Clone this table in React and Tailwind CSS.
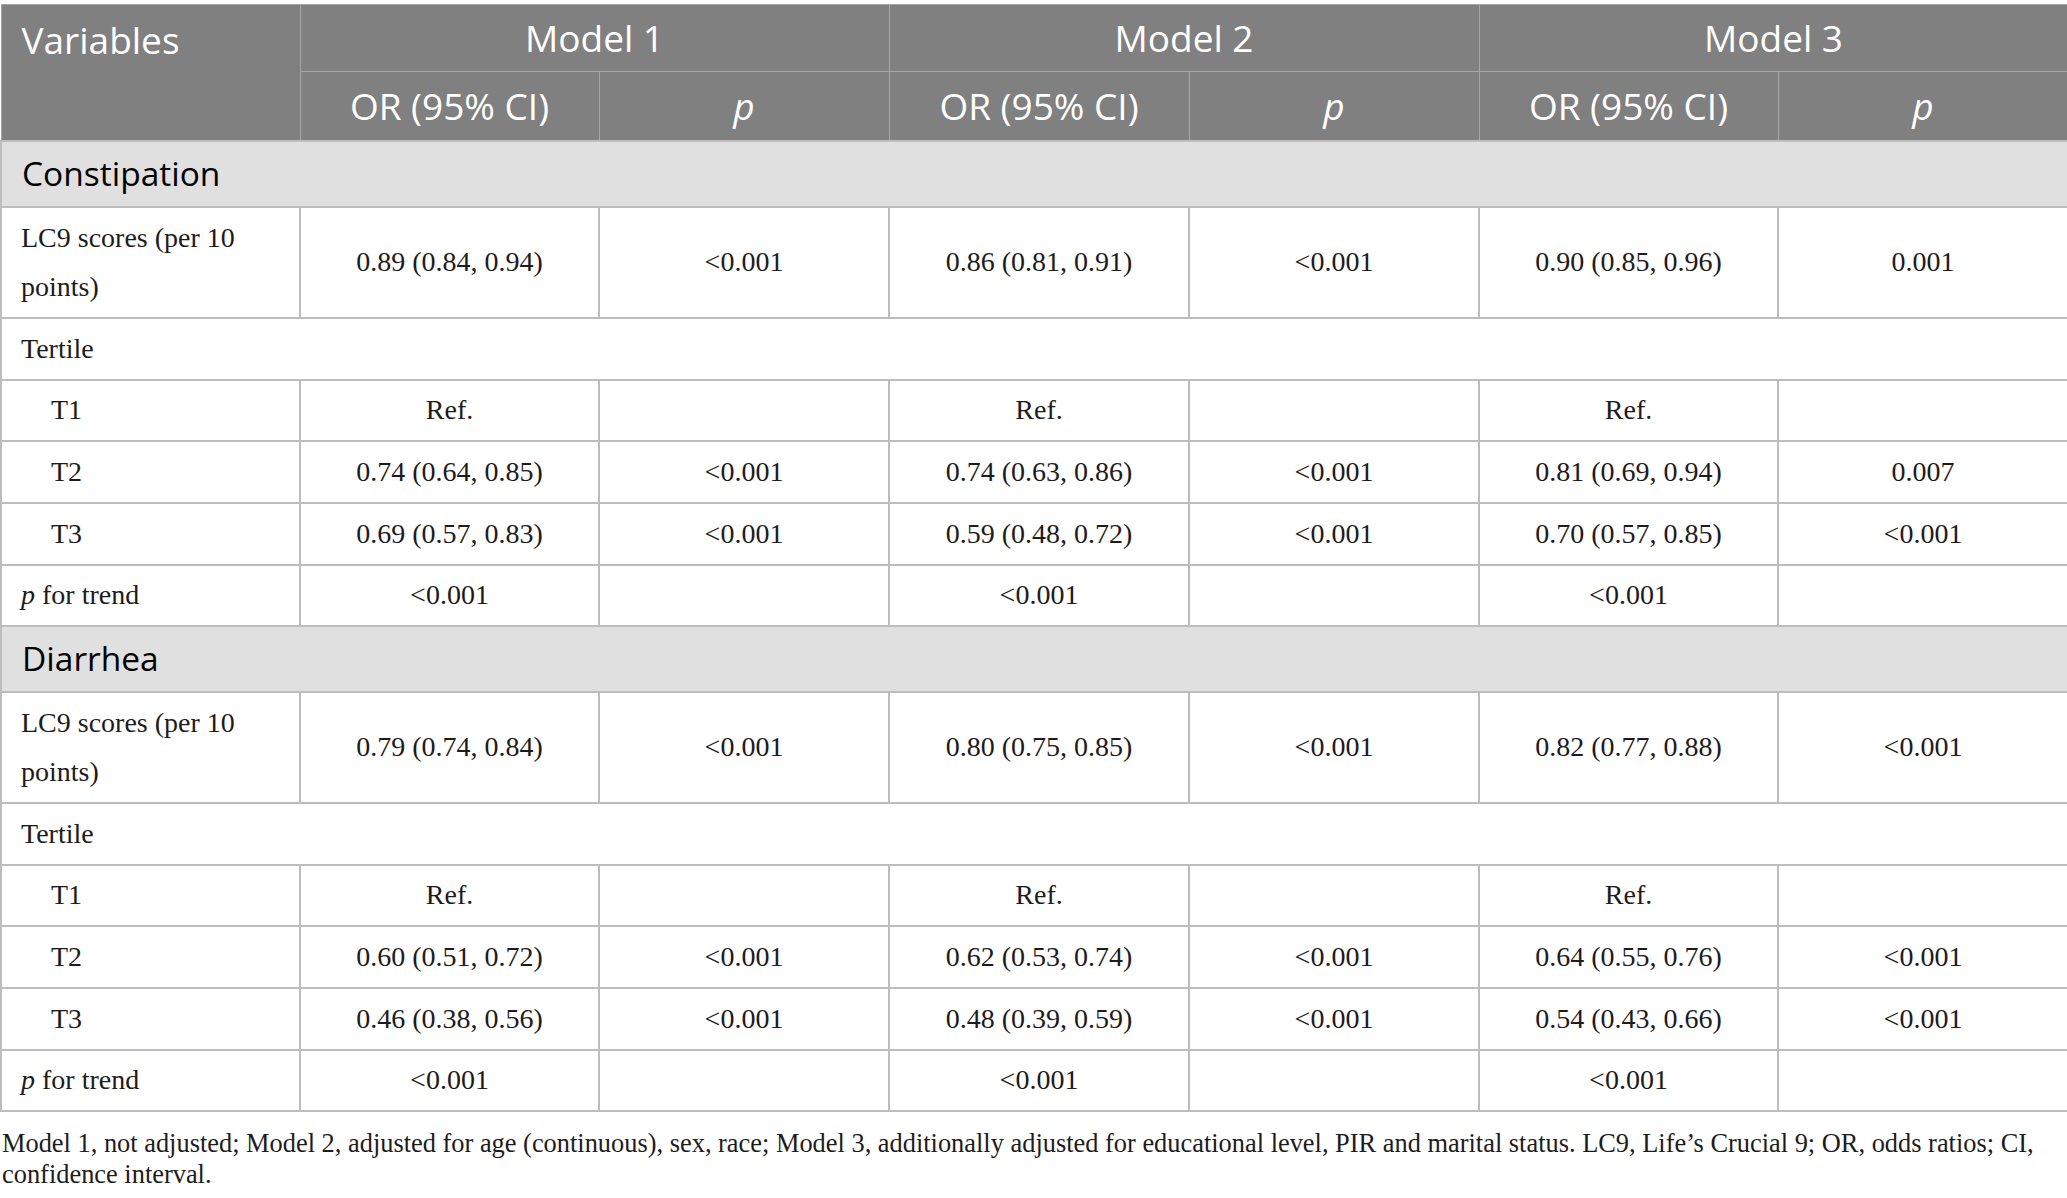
import React from 'react';

const sans = { fontFamily: '"Open Sans", "Noto Sans", sans-serif' };

const sections = [
    {
        title: 'Constipation',
        lc9: ['0.89 (0.84, 0.94)', '<0.001', '0.86 (0.81, 0.91)', '<0.001', '0.90 (0.85, 0.96)', '0.001'],
        rows: [
            ['T1', 'Ref.', '', 'Ref.', '', 'Ref.', ''],
            ['T2', '0.74 (0.64, 0.85)', '<0.001', '0.74 (0.63, 0.86)', '<0.001', '0.81 (0.69, 0.94)', '0.007'],
            ['T3', '0.69 (0.57, 0.83)', '<0.001', '0.59 (0.48, 0.72)', '<0.001', '0.70 (0.57, 0.85)', '<0.001'],
        ],
        trend: ['<0.001', '', '<0.001', '', '<0.001', ''],
    },
    {
        title: 'Diarrhea',
        lc9: ['0.79 (0.74, 0.84)', '<0.001', '0.80 (0.75, 0.85)', '<0.001', '0.82 (0.77, 0.88)', '<0.001'],
        rows: [
            ['T1', 'Ref.', '', 'Ref.', '', 'Ref.', ''],
            ['T2', '0.60 (0.51, 0.72)', '<0.001', '0.62 (0.53, 0.74)', '<0.001', '0.64 (0.55, 0.76)', '<0.001'],
            ['T3', '0.46 (0.38, 0.56)', '<0.001', '0.48 (0.39, 0.59)', '<0.001', '0.54 (0.43, 0.66)', '<0.001'],
        ],
        trend: ['<0.001', '', '<0.001', '', '<0.001', ''],
    },
];

const td = 'border-2 border-[#bdbdbd] text-center align-middle px-3';
const firstTd = 'border-2 border-[#bdbdbd] text-left align-middle pl-[19px] pr-3';
const th = 'border border-[#a5a6a5] font-normal text-center align-middle';

function Section({ s }) {
    return (
        <>
            <tr className="h-[66px] bg-[#e1e0e1]">
                <td colSpan={7} className="border-2 border-[#bdbdbd] pl-[20px] text-[33.5px] text-black" style={sans}>
                    {s.title}
                </td>
            </tr>
            <tr className="h-[111px]">
                <td className={`${firstTd} leading-[49px]`}>LC9 scores (per 10 points)</td>
                {s.lc9.map((v, i) => (
                    <td key={i} className={td}>{v}</td>
                ))}
            </tr>
            <tr className="h-[62px]">
                <td colSpan={7} className={firstTd}>Tertile</td>
            </tr>
            {s.rows.map((r, i) => (
                <tr key={i} className={i === 0 ? 'h-[61px]' : 'h-[62px]'}>
                    <td className={`${firstTd} pl-[49px]`}>{r[0]}</td>
                    {r.slice(1).map((v, j) => (
                        <td key={j} className={td}>{v}</td>
                    ))}
                </tr>
            ))}
            <tr className="h-[61px]">
                <td className={firstTd}><i>p</i> for trend</td>
                {s.trend.map((v, i) => (
                    <td key={i} className={td}>{v}</td>
                ))}
            </tr>
        </>
    );
}

export default function App() {
    return (
        <div className="w-[2067px] bg-white pt-[4px] text-[#1e1b1c]" style={{ fontFamily: '"Liberation Serif", serif' }}>
            <table className="w-[2067px] table-fixed border-collapse text-[28px]">
                <colgroup>
                    <col className="w-[299px]" />
                    <col className="w-[299px]" />
                    <col className="w-[290px]" />
                    <col className="w-[300px]" />
                    <col className="w-[290px]" />
                    <col className="w-[299px]" />
                    <col className="w-[290px]" />
                </colgroup>
                <thead className="bg-[#7f807f] text-white text-[37px]" style={sans}>
                    <tr className="h-[67px]">
                        <th rowSpan={2} className={`${th} text-left align-top pl-[20px] pt-[7px]`}>Variables</th>
                        <th colSpan={2} className={th}>Model 1</th>
                        <th colSpan={2} className={th}>Model 2</th>
                        <th colSpan={2} className={th}>Model 3</th>
                    </tr>
                    <tr className="h-[69px]">
                        <th className={th}>OR (95% CI)</th>
                        <th className={th}><i>p</i></th>
                        <th className={th}>OR (95% CI)</th>
                        <th className={th}><i>p</i></th>
                        <th className={th}>OR (95% CI)</th>
                        <th className={th}><i>p</i></th>
                    </tr>
                </thead>
                <tbody>
                    {sections.map((s) => (
                        <Section key={s.title} s={s} />
                    ))}
                </tbody>
            </table>
            <p className="pl-[2px] pr-2 pt-[16px] text-[26.4px] leading-[31px]">
                Model 1, not adjusted; Model 2, adjusted for age (continuous), sex, race; Model 3, additionally adjusted for educational level, PIR and marital status. LC9, Life’s Crucial 9; OR, odds ratios; CI, confidence interval.
            </p>
        </div>
    );
}
